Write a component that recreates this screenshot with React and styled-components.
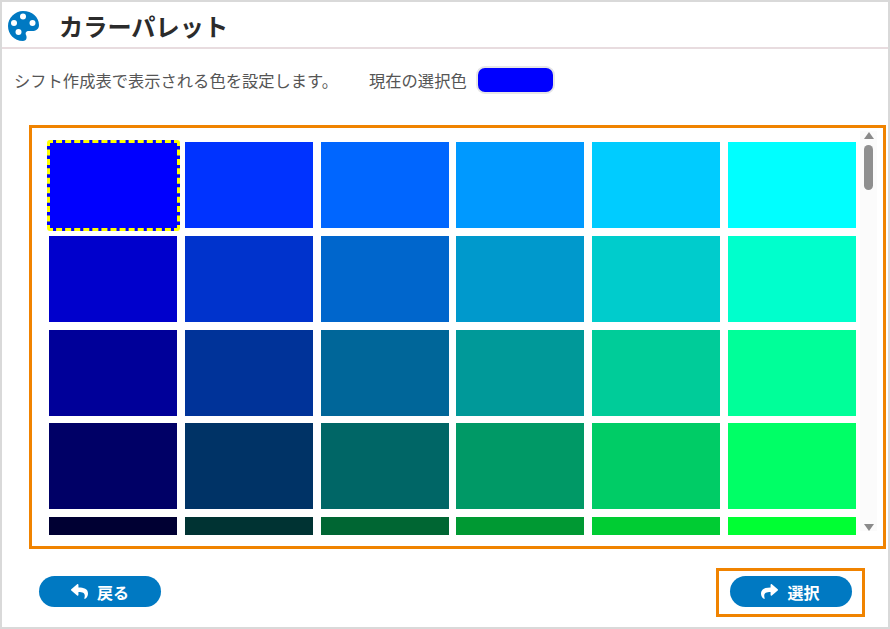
import styled, { createGlobalStyle } from "styled-components";
import { FaReply, FaShare } from "react-icons/fa";

const GlobalStyle = createGlobalStyle`
  html, body {
    margin: 0;
    padding: 0;
    background: #fff;
  }
  body {
    font-family: "Noto Sans CJK JP", "Noto Sans", sans-serif;
  }
`;

const Page = styled.div`
  box-sizing: border-box;
  width: 890px;
  height: 629px;
  border: 2px solid #d9d9d9;
  background: #fff;
  display: flex;
  flex-direction: column;
`;

const Header = styled.header`
  box-sizing: border-box;
  height: 47px;
  flex-shrink: 0;
  display: flex;
  align-items: center;
  padding: 2px 0 0 6px;
  gap: 20px;
  border-bottom: 2px solid #e8dcdf;
`;

const Title = styled.h1`
  margin: 0;
  font-size: 24.2px;
  line-height: 30px;
  font-weight: 700;
  color: #2b2b2b;
`;

const InfoRow = styled.div`
  height: 32px;
  margin-top: 15px;
  flex-shrink: 0;
  display: flex;
  align-items: center;
  padding-left: 12px;
  font-size: 16.3px;
  color: #555;
`;

const CurrentLabel = styled.span`
  margin-left: 31px;
`;

const CurrentColor = styled.span`
  box-sizing: border-box;
  width: 79px;
  height: 28px;
  margin-left: 9px;
  border: 2px solid #e6e6e6;
  border-radius: 9px;
  background: ${(props) => props.color};
`;

const Panel = styled.section`
  box-sizing: border-box;
  width: 857px;
  height: 424px;
  margin: 29px 0 0 27px;
  flex-shrink: 0;
  border: 3px solid #f08300;
  display: flex;
`;

const Swatches = styled.div`
  flex: 1;
  overflow: hidden;
  margin-bottom: 11px;
  padding: 14px 0 0 17px;
  display: grid;
  grid-template-columns: repeat(6, 128px);
  grid-auto-rows: 86px;
  column-gap: 7.8px;
  row-gap: 7.75px;
`;

const Swatch = styled.button`
  display: block;
  padding: 0;
  border: 0;
  background: ${(props) => props.color};
`;

const SelectedSwatch = styled(Swatch)`
  box-sizing: border-box;
  width: 133px;
  height: 91px;
  margin: -2px 0 0 -2px;
  border: 3px dashed #ffff00;
  border-radius: 3px;
`;

const Scrollbar = styled.div`
  width: 17px;
  margin: 3px 6px 15px 0;
  flex-shrink: 0;
  background: #fbfbfb;
  display: flex;
  flex-direction: column;
  align-items: center;
`;

const ArrowUp = styled.span`
  margin-top: 1px;
  width: 0;
  height: 0;
  border-left: 5px solid transparent;
  border-right: 5px solid transparent;
  border-bottom: 7px solid #8a8a8a;
`;

const Thumb = styled.span`
  width: 9px;
  height: 45px;
  margin-top: 6px;
  border-radius: 5px;
  background: #8f8f8f;
`;

const ArrowDown = styled.span`
  margin-top: auto;
  width: 0;
  height: 0;
  border-left: 5px solid transparent;
  border-right: 5px solid transparent;
  border-top: 7px solid #8a8a8a;
`;

const Footer = styled.footer`
  display: flex;
  align-items: center;
  justify-content: space-between;
  margin-top: 19px;
  padding: 0 23px 0 37px;
`;

const Highlight = styled.div`
  box-sizing: border-box;
  width: 149px;
  height: 49px;
  padding-bottom: 2px;
  border: 3px solid #f08300;
  display: flex;
  align-items: center;
  justify-content: center;
`;

const PillButton = styled.button`
  width: 122px;
  height: 31px;
  padding: 0;
  border: 0;
  border-radius: 16px;
  background: #0079c2;
  color: #fff;
  font-family: inherit;
  font-size: 16px;
  font-weight: 700;
  display: flex;
  align-items: center;
  justify-content: center;
  gap: 9px;
`;

const BackButton = styled(PillButton)`
  margin-bottom: 2px;
`;

const hues = ["FF", "CC", "99", "66", "33"];
const greens = ["00", "33", "66", "99", "CC", "FF"];

function PaletteIcon() {
  return (
    <svg width="31" height="30" viewBox="0 0 31 30">
      <path
        fill="#0079c2"
        d="M15 0C24 0 31 6 31 14C31 18 28 20 24 20H21C18 20 17 22 18 24C19.5 27 18 30 15 30C6 30 0 23 0 15C0 7 7 0 15 0Z"
      />
      <circle cx="15" cy="5.5" r="3" fill="#fff" />
      <circle cx="6" cy="12" r="3" fill="#fff" />
      <circle cx="24.5" cy="12" r="3" fill="#fff" />
      <circle cx="10.5" cy="21" r="3" fill="#fff" />
    </svg>
  );
}

function App() {
  return (
    <>
      <GlobalStyle />
      <Page>
        <Header>
          <PaletteIcon />
          <Title>カラーパレット</Title>
        </Header>
        <InfoRow>
          シフト作成表で表示される色を設定します。
          <CurrentLabel>現在の選択色</CurrentLabel>
          <CurrentColor color="#0000ff" />
        </InfoRow>
        <Panel>
          <Swatches>
            {hues.map((blue) =>
              greens.map((green) => {
                const color = `#00${green}${blue}`;
                const Cell = color === "#0000FF" ? SelectedSwatch : Swatch;
                return <Cell key={color} color={color} aria-label={color} />;
              })
            )}
          </Swatches>
          <Scrollbar>
            <ArrowUp />
            <Thumb />
            <ArrowDown />
          </Scrollbar>
        </Panel>
        <Footer>
          <BackButton>
            <FaReply size={17} />
            戻る
          </BackButton>
          <Highlight>
            <PillButton>
              <FaShare size={17} />
              選択
            </PillButton>
          </Highlight>
        </Footer>
      </Page>
    </>
  );
}

export default App;
